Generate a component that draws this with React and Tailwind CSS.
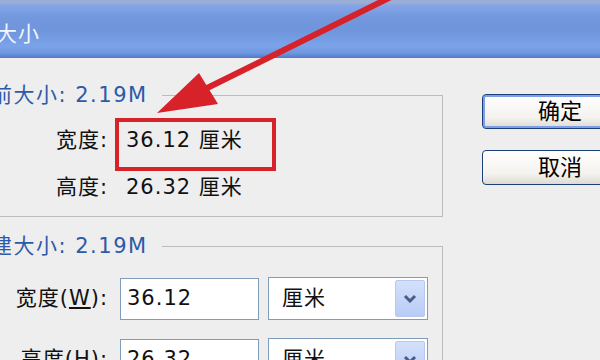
import React from "react";

const font = "font-['DejaVu_Sans','Noto_Sans_CJK_SC',sans-serif]";

function Group({ title, className = "", children }) {
  return (
    <fieldset className={`border border-[#bcbcbc] ${className}`}>
      <legend className="ml-[10px] pr-[14px] text-[21px] leading-[24px] tracking-[1.5px] text-[#2c5aa8]">
        {title}
      </legend>
      {children}
    </fieldset>
  );
}

function UnitSelect() {
  return (
    <div className="flex h-[43px] w-[160px] items-center border border-[#7f9db9] bg-white pl-[13px] pr-[2px]">
      <span className="flex-1 text-[21px] leading-none">厘米</span>
      <div className="flex h-[37px] w-[30px] items-center justify-center rounded-[2px] border border-[#b7c9f0] bg-[linear-gradient(to_bottom,#d4e0fb,#b9ccf6)]">
        <svg width="14" height="9" viewBox="0 0 14 9">
          <path d="M2 2 L7 7 L12 2" fill="none" stroke="#4a5d86" strokeWidth="3" />
        </svg>
      </div>
    </div>
  );
}

function XpButton({ label, primary }) {
  return (
    <button
      className={`h-[35px] w-[156px] rounded-[4px] border border-[#1d3f77] bg-[linear-gradient(to_bottom,#ffffff,#f3f2ee_70%,#dcdad2)] text-[22px] leading-none text-black ${
        primary ? "shadow-[inset_0_0_0_2px_#7fa0e6]" : ""
      }`}
    >
      {label}
    </button>
  );
}

export default function App() {
  return (
    <div className={`relative h-[360px] w-[600px] overflow-hidden bg-[#eeeeee] text-[#111] ${font}`}>
      <div className="flex h-[58px] items-center bg-[linear-gradient(to_bottom,#9aaed6_0px,#9aaed6_3px,#86a6e8_5px,#7297dd_18px,#6f95dc_30px,#7aa3e9_46px,#6f97e0_53px,#5378c8_58px)] pt-[10px]">
        <span className="-ml-[4px] text-[21px] leading-none tracking-[1px] text-[#f2f6ff]">大小</span>
      </div>

      <div className="flex">
        <div className="-ml-[20px] w-[463px] shrink-0 pt-[25px]">
          <Group title="前大小: 2.19M">
            <div className="grid grid-cols-[127px_1fr] gap-x-[18px] gap-y-[23px] pb-[17px] pt-[21px] text-[21px] leading-[24px] tracking-[1px]">
              <span className="text-right">宽度:</span>
              <span>36.12 厘米</span>
              <span className="text-right">高度:</span>
              <span>26.32 厘米</span>
            </div>
          </Group>

          <Group title="建大小: 2.19M" className="mt-[17px]">
            <div className="grid grid-cols-[127px_139px_160px] items-center gap-x-[12px] gap-y-[18px] pb-[20px] pt-[19px] text-[21px] tracking-[1px]">
              <span className="text-right">
                宽度(<span className="underline">W</span>):
              </span>
              <div className="flex h-[42px] items-center border border-[#7f9db9] bg-white pl-[6px]">36.12</div>
              <div className="-ml-[3px]">
                <UnitSelect />
              </div>
              <span className="text-right">
                高度(<span className="underline">H</span>):
              </span>
              <div className="flex h-[42px] items-center border border-[#7f9db9] bg-white pl-[6px]">26.32</div>
              <div className="-ml-[3px]">
                <UnitSelect />
              </div>
            </div>
          </Group>
        </div>

        <div className="ml-[39px] flex shrink-0 flex-col gap-[21px] pt-[36px]">
          <XpButton label="确定" primary />
          <XpButton label="取消" />
        </div>
      </div>

      <div className="absolute left-[115px] top-[118px] h-[53px] w-[161px] border-4 border-[#d8222a]" />

      <svg className="absolute left-0 top-0" width="600" height="360" viewBox="0 0 600 360">
        <line x1="405" y1="-10" x2="195" y2="94" stroke="#d8222a" strokeWidth="6" />
        <polygon points="157,113 199,73 218,104" fill="#d8222a" />
      </svg>
    </div>
  );
}
